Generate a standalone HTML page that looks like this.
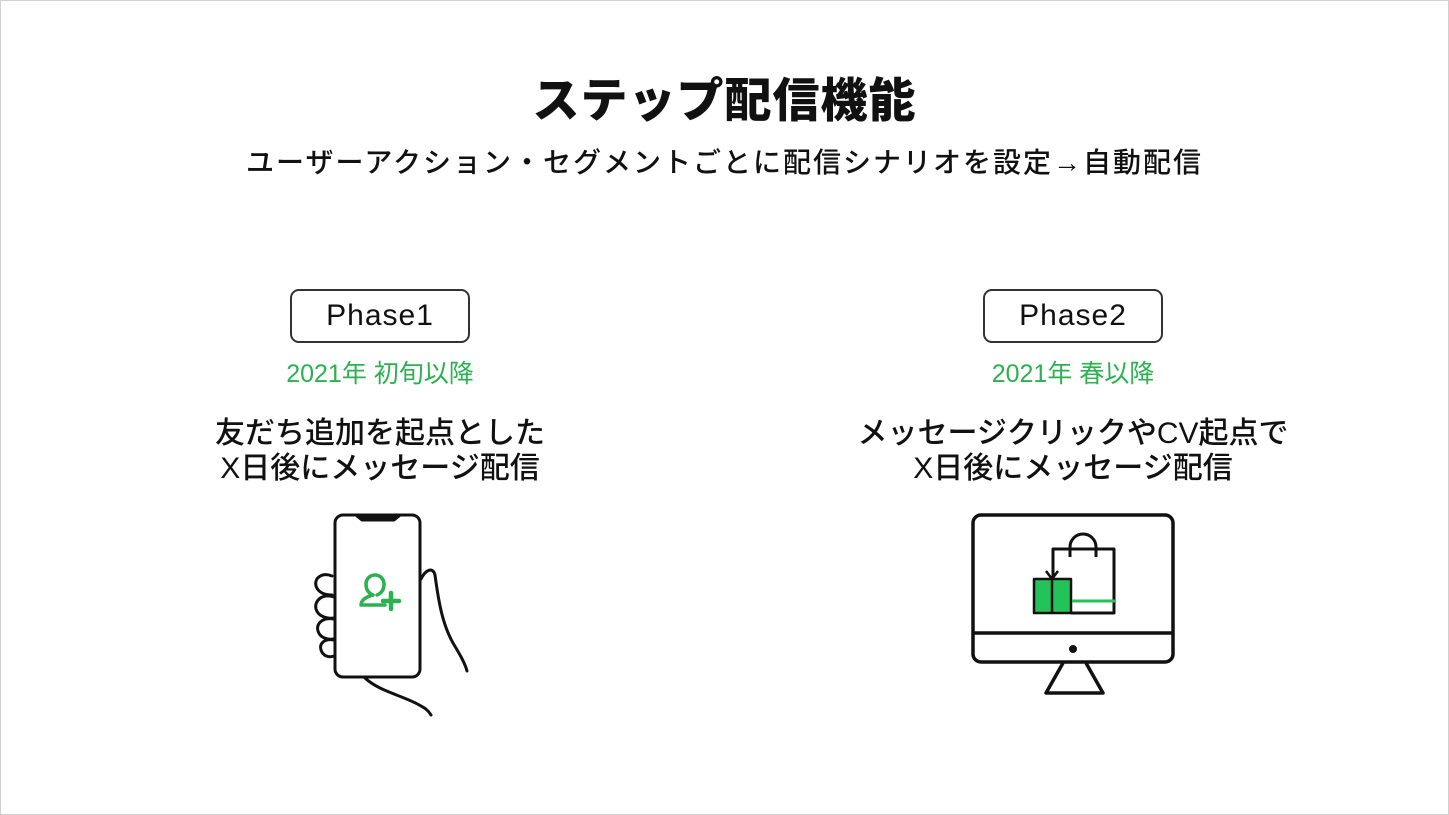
<!DOCTYPE html>
<html><head><meta charset="utf-8"><style>
html,body{margin:0;padding:0;background:#fff}
body{width:1449px;height:815px;position:relative;overflow:hidden;font-family:"Liberation Sans","Noto Sans CJK JP",sans-serif;color:#111}
.frame{position:absolute;left:0;top:0;width:1447px;height:813px;border:1px solid #d0d0d0}
.c{position:absolute;text-align:center;white-space:nowrap}
.box{position:absolute;border:2px solid #333;border-radius:9px;font-size:30px;letter-spacing:1px;text-align:center;line-height:50px;box-sizing:border-box;height:54px;width:180px}
.g{color:#2bb14f;font-size:25px}
.d{font-size:30px;line-height:35px;font-weight:500}
</style></head><body>
<div class="frame"></div>
<div class="c" style="left:0;width:1449px;top:62px;font-size:47px;font-weight:900;letter-spacing:1px">ステップ配信機能</div>
<div class="c" style="left:0;width:1449px;top:141px;font-size:28px;font-weight:500;letter-spacing:2px">ユーザーアクション・セグメントごとに配信シナリオを設定→自動配信</div>

<div class="box" style="left:290px;top:289px">Phase1</div>
<div class="c g" style="left:180px;width:400px;top:354px">2021年 初旬以降</div>
<div class="c d" style="left:180px;width:400px;top:416px">友だち追加を起点とした<br>X日後にメッセージ配信</div>

<div class="box" style="left:983px;top:289px">Phase2</div>
<div class="c g" style="left:873px;width:400px;top:354px">2021年 春以降</div>
<div class="c d" style="left:823px;width:500px;top:416px">メッセージクリックやCV起点で<br>X日後にメッセージ配信</div>

<svg style="position:absolute;left:290px;top:500px" width="200" height="220" viewBox="0 0 200 220" fill="none" stroke="#111" stroke-width="3" stroke-linecap="round" stroke-linejoin="round">
<path d="M42 76 c-10-4-18 2-16 10 c2 6 8 9 16 9"/>
<path d="M44 97 c-12-4-20 4-18 12 c2 7 10 10 18 9"/>
<path d="M44 119 c-12-2-18 5-16 12 c2 7 10 9 16 8"/>
<path d="M44 140 c-10-2-15 4-13 10 c2 6 8 8 13 6"/>
<rect x="45" y="15" width="85" height="162" rx="8" fill="#fff"/>
<path d="M67 16 l5 4 h32 l5 -4" fill="#111"/>
<path d="M131 79 c5-10 12-12 14-4 c4 30 8 50 18 68 c6 10 12 20 14 28"/>
<path d="M75 178 c15 14 40 18 56 28 c6 3 8 6 10 9"/>
<g stroke="#2bb14f" stroke-width="3.5">
<path d="M83 95 c-8 2-12 6-12 10 h24"/>
<path d="M83 95 c-5-2-7-6-7-11 a9 9 0 0 1 18 0 c0 5-2 9-7 11"/>
<path d="M101 93 v16 M93 101 h16" stroke-width="4.5"/>
</g>
</svg>

<svg style="position:absolute;left:960px;top:505px" width="230" height="200" viewBox="0 0 230 200" fill="none" stroke="#111" stroke-width="3.5" stroke-linejoin="round">
<rect x="13" y="10" width="200" height="147" rx="8"/>
<path d="M14 128 h198"/>
<circle cx="113" cy="144" r="4" fill="#111" stroke="none"/>
<path d="M103 158 l-17 30 h57 l-17 -30"/>
<path d="M93 72 v-28 h61 v64 h-43" stroke-width="3"/>
<path d="M110 52 v-10 a13 13 0 0 1 26 0 v10" stroke-width="3"/>
<rect x="74" y="74" width="37" height="34" fill="#24c35a" stroke-width="2.5"/>
<path d="M92 74 v35 M86 66 l6 8 l6 -8" stroke-width="2.5"/>
<path d="M112 96 h43" stroke="#24c35a" stroke-width="3"/>
</svg>
</body></html>
